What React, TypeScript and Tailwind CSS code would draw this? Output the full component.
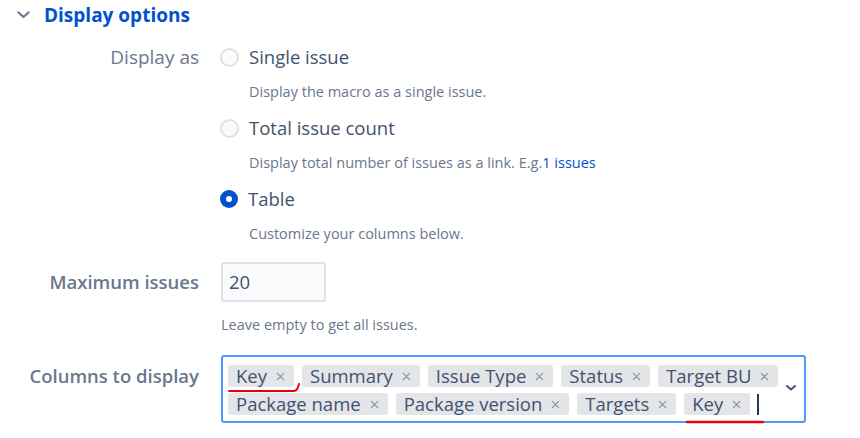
import React from "react";

const font = { fontFamily: '"Open Sans", "Noto Sans", sans-serif' };

function Radio({ checked }: { checked?: boolean }) {
  if (checked) {
    return (
      <span className="flex h-[18px] w-[18px] shrink-0 items-center justify-center rounded-full bg-[#0052cc]">
        <span className="h-[6px] w-[6px] rounded-full bg-white" />
      </span>
    );
  }
  return <span className="h-[19px] w-[19px] shrink-0 rounded-full border-2 border-[#dfe1e6] bg-[#fafbfc]" />;
}

function Tag({ label }: { label: string }) {
  return (
    <span className="flex h-[22px] items-center gap-[9px] rounded-[3px] bg-[#e3e5e9] pl-[8px] pr-[9px] text-[18.5px] leading-none text-[#42526e]">
      {label}
      <svg width="9" height="9" viewBox="0 0 10 10" className="mt-[1px]">
        <path d="M1.5 1.5 L8.5 8.5 M8.5 1.5 L1.5 8.5" stroke="#8993a4" strokeWidth="1.4" strokeLinecap="round" />
      </svg>
    </span>
  );
}

export default function App() {
  return (
    <div className="h-[438px] w-[860px] overflow-hidden bg-white" style={font}>
      {/* header */}
      <div className="flex h-[30px] items-center pl-[17px]">
        <svg width="13" height="8" viewBox="0 0 13 8" className="mt-[-1px]">
          <path d="M1.5 1.5 L6.5 6 L11.5 1.5" stroke="#6b778c" strokeWidth="2.2" fill="none" strokeLinecap="round" strokeLinejoin="round" />
        </svg>
        <span className="ml-[14px] text-[19px] font-bold text-[#0052cc]">Display options</span>
      </div>

      {/* Display as */}
      <div className="mt-[12px] flex">
        <div className="flex h-[30px] w-[199px] shrink-0 items-center justify-end text-[19px] text-[#6b778c]">Display as</div>
        <div className="ml-[21px] flex flex-col">
          <div className="flex h-[30px] items-center gap-[10px]">
            <Radio />
            <span className="text-[18.5px] text-[#42526e]">Single issue</span>
          </div>
          <div className="ml-[29px] mt-[10px] h-[31px] text-[14.5px] leading-[20px] text-[#6b778c]">Display the macro as a single issue.</div>
          <div className="flex h-[30px] items-center gap-[10px]">
            <Radio />
            <span className="text-[18.5px] text-[#42526e]">Total issue count</span>
          </div>
          <div className="ml-[29px] mt-[10px] h-[31px] text-[14.5px] leading-[20px] text-[#6b778c]">
            Display total number of issues as a link. E.g.<span className="text-[#0052cc]">1 issues</span>
          </div>
          <div className="flex h-[30px] items-center gap-[10px]">
            <Radio checked />
            <span className="text-[18.5px] text-[#42526e]">Table</span>
          </div>
          <div className="ml-[29px] mt-[10px] h-[20px] text-[14.5px] leading-[20px] text-[#6b778c]">Customize your columns below.</div>
        </div>
      </div>

      {/* Maximum issues */}
      <div className="mt-[18px] flex">
        <div className="flex h-[40px] w-[199px] shrink-0 items-center justify-end text-[18.5px] font-semibold text-[#6b778c]">Maximum issues</div>
        <div className="ml-[22px] flex flex-col">
          <div className="flex h-[40px] w-[105px] items-center rounded-[3px] border-2 border-[#dfe1e6] bg-[#fafbfc] pl-[6px] text-[18.5px] text-[#42526e]">20</div>
          <div className="mt-[14px] text-[14.5px] leading-[18px] text-[#6b778c]">Leave empty to get all issues.</div>
        </div>
      </div>

      {/* Columns to display */}
      <div className="mt-[21px] flex">
        <div className="flex h-[42px] w-[199px] shrink-0 items-center justify-end text-[18.5px] font-semibold text-[#6b778c]">Columns to display</div>
        <div className="relative ml-[22px] h-[68px] w-[585px] rounded-[3px] border-2 border-[#4c9aff] bg-white pl-[5px] pt-[8px]">
          <div className="flex w-[555px] flex-wrap gap-x-[8px] gap-y-[6px]">
            <Tag label="Key" />
            <Tag label="Summary" />
            <Tag label="Issue Type" />
            <Tag label="Status" />
            <Tag label="Target BU" />
            <Tag label="Package name" />
            <Tag label="Package version" />
            <Tag label="Targets" />
            <Tag label="Key" />
            <span className="ml-[-1px] mt-[1px] h-[21px] w-[2px] bg-[#253858]" />
          </div>
          <svg width="12" height="8" viewBox="0 0 12 8" className="absolute right-[7px] top-[27px]">
            <path d="M2 2 L6 5.5 L10 2" stroke="#42526e" strokeWidth="2" fill="none" strokeLinecap="round" strokeLinejoin="round" />
          </svg>
          {/* red underline annotations */}
          <svg width="80" height="16" viewBox="0 0 80 16" className="absolute left-[4px] top-[22px]">
            <path d="M2 12 L66 12 Q70 12 71 8 L72 5" stroke="#e8000b" strokeWidth="2" fill="none" strokeLinecap="round" />
          </svg>
          <svg width="80" height="6" viewBox="0 0 80 6" className="absolute left-[463px] top-[62px]">
            <path d="M1 3 L77 3" stroke="#e8000b" strokeWidth="2.4" fill="none" strokeLinecap="round" />
          </svg>
        </div>
      </div>
    </div>
  );
}
